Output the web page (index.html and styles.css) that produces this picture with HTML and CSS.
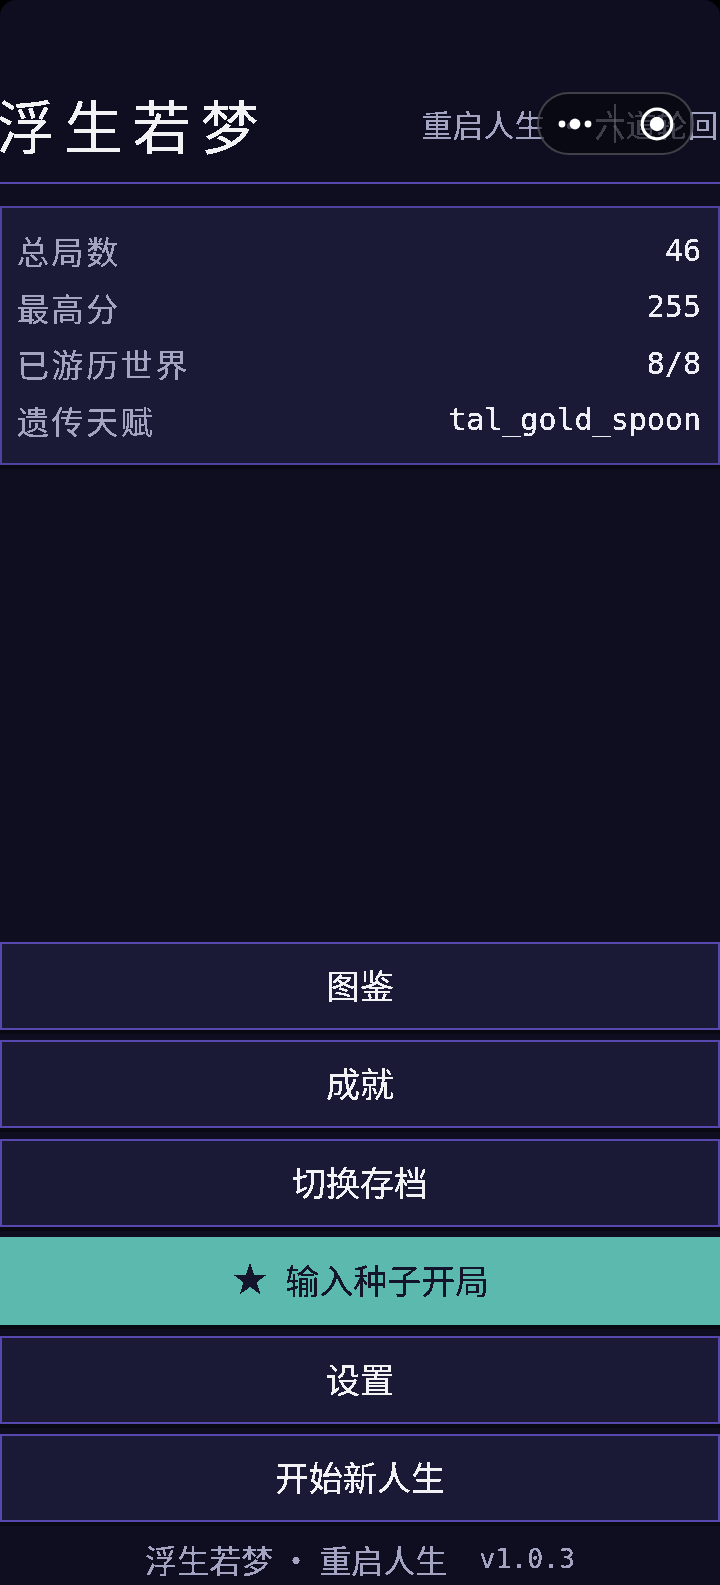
FILE: index.html
```html
<!DOCTYPE html>
<html lang="zh-CN">
<head>
<meta charset="utf-8">
<title>浮生若梦</title>
<link rel="stylesheet" href="styles.css">
</head>
<body>
<svg class="defs" width="0" height="0" aria-hidden="true">
  <filter id="crisp" x="0" y="0" width="100%" height="100%" color-interpolation-filters="sRGB">
    <feComponentTransfer><feFuncA type="discrete" tableValues="0 1 1"/></feComponentTransfer>
  </filter>
</svg>
<main class="screen">
  <header class="header">
    <h1 class="title">浮生若梦</h1>
    <p class="subtitle">重启人生 · 六道轮回</p>
  </header>
  <section class="stats">
    <div class="row"><span class="label">总局数</span><span class="value">46</span></div>
    <div class="row"><span class="label">最高分</span><span class="value">255</span></div>
    <div class="row"><span class="label">已游历世界</span><span class="value">8/8</span></div>
    <div class="row"><span class="label">遗传天赋</span><span class="value">tal_gold_spoon</span></div>
  </section>
  <nav class="menu">
    <button class="btn"><span class="btn-text">图鉴</span></button>
    <button class="btn"><span class="btn-text">成就</span></button>
    <button class="btn"><span class="btn-text">切换存档</span></button>
    <button class="btn btn-primary"><span class="star">★</span><span class="btn-text">输入种子开局</span></button>
    <button class="btn"><span class="btn-text">设置</span></button>
    <button class="btn"><span class="btn-text">开始新人生</span></button>
  </nav>
  <footer class="footer"><span class="footer-text">浮生若梦 · 重启人生</span><span class="version">v1.0.3</span></footer>
  <div class="capsule" aria-hidden="true">
    <svg class="capsule-dots" width="46" height="16" viewBox="0 0 46 16"><circle cx="5" cy="8" r="3.4"/><circle cx="18" cy="8" r="5.4"/><circle cx="31" cy="8" r="3.4"/></svg>
    <i class="capsule-sep"></i>
    <svg class="capsule-target" width="34" height="34" viewBox="0 0 34 34"><circle class="ring" cx="17" cy="17" r="14.8"/><circle class="core" cx="17" cy="17" r="7.2"/></svg>
  </div>
</main>
</body>
</html>
```
FILE: styles.css
```css
* { box-sizing: border-box; }
html, body { margin: 0; padding: 0; }
body {
  width: 720px;
  height: 1585px;
  overflow: hidden;
  background: #000;
  font-family: "Noto Sans CJK SC", "Noto Sans", sans-serif;
}
.defs { position: absolute; }
.screen {
  position: relative;
  width: 720px;
  height: 1585px;
  overflow: hidden;
  display: flex;
  flex-direction: column;
  background: #0e0e20;
  border-radius: 16px 16px 0 0;
}
.header {
  flex: none;
  height: 184px;
  padding: 92px 5px 26px 0;
  display: flex;
  justify-content: center;
  align-items: center;
  gap: 153px;
  white-space: nowrap;
  border-bottom: 2px solid #5648ae;
}
.title {
  flex: none;
  margin: 0;
  font-size: 58px;
  line-height: 64px;
  font-weight: 400;
  letter-spacing: 10px;
  color: #f2f2f5;
  filter: url(#crisp);
}
.subtitle {
  flex: none;
  margin: 0;
  font-size: 31px;
  line-height: 40px;
  word-spacing: 2px;
  color: #a3a3c2;
  filter: url(#crisp);
}
.stats {
  flex: none;
  margin-top: 22px;
  height: 259px;
  padding: 14px 17px 15px 15px;
  display: flex;
  flex-direction: column;
  background: #1a1a36;
  border: 2px solid #4e43a0;
  box-shadow: 0 4px 0 rgba(0, 0, 0, 0.35);
}
.row {
  display: flex;
  justify-content: space-between;
  align-items: center;
  height: 56.5px;
}
.label {
  font-size: 32px;
  letter-spacing: 2.6px;
  color: #a3a3c2;
  filter: url(#crisp);
}
.value {
  font-family: "DejaVu Sans Mono", "Noto Sans CJK SC", monospace;
  font-size: 30px;
  color: #eeeef5;
  filter: url(#crisp);
}
.menu {
  flex: none;
  margin-top: auto;
  display: flex;
  flex-direction: column;
  gap: 10.4px;
}
.btn {
  display: flex;
  justify-content: center;
  align-items: center;
  height: 88px;
  width: 100%;
  margin: 0;
  padding: 0 0 3px;
  font-family: inherit;
  font-size: 34px;
  color: #f2f2f5;
  background: #1a1a36;
  border: 2px solid #5648ae;
  border-radius: 0;
  box-shadow: 0 4px 0 rgba(0, 0, 0, 0.35);
}
.btn-text { filter: url(#crisp); }
.btn-primary {
  background: #5bb9ad;
  border-color: #5bb9ad;
  color: #14142c;
}
.star {
  margin-right: 16px;
  font-family: "DejaVu Sans", sans-serif;
  font-size: 43px;
  line-height: 1;
  filter: url(#crisp);
}
.footer {
  flex: none;
  height: 63px;
  padding-top: 10px;
  display: flex;
  justify-content: center;
  align-items: center;
  gap: 32px;
  font-size: 32px;
  color: #a3a3c2;
}
.footer-text { filter: url(#crisp); }
.version {
  font-family: "DejaVu Sans Mono", monospace;
  font-size: 26.5px;
  filter: url(#crisp);
}
.capsule {
  position: absolute;
  top: 92px;
  left: 537px;
  width: 157px;
  height: 63px;
  display: flex;
  align-items: center;
  border: 2px solid rgba(120, 120, 125, 0.5);
  border-radius: 32px;
  background: rgba(8, 8, 12, 0.65);
}
.capsule-dots {
  margin-left: 18px;
  fill: #fff;
}
.capsule-sep {
  position: absolute;
  left: 75px;
  top: 10px;
  width: 2px;
  height: 39px;
  background: rgba(110, 110, 118, 0.55);
}
.capsule-target {
  position: absolute;
  left: 101px;
  top: 13px;
}
.ring { fill: none; stroke: #fff; stroke-width: 3.2; }
.core { fill: #fff; }
```
